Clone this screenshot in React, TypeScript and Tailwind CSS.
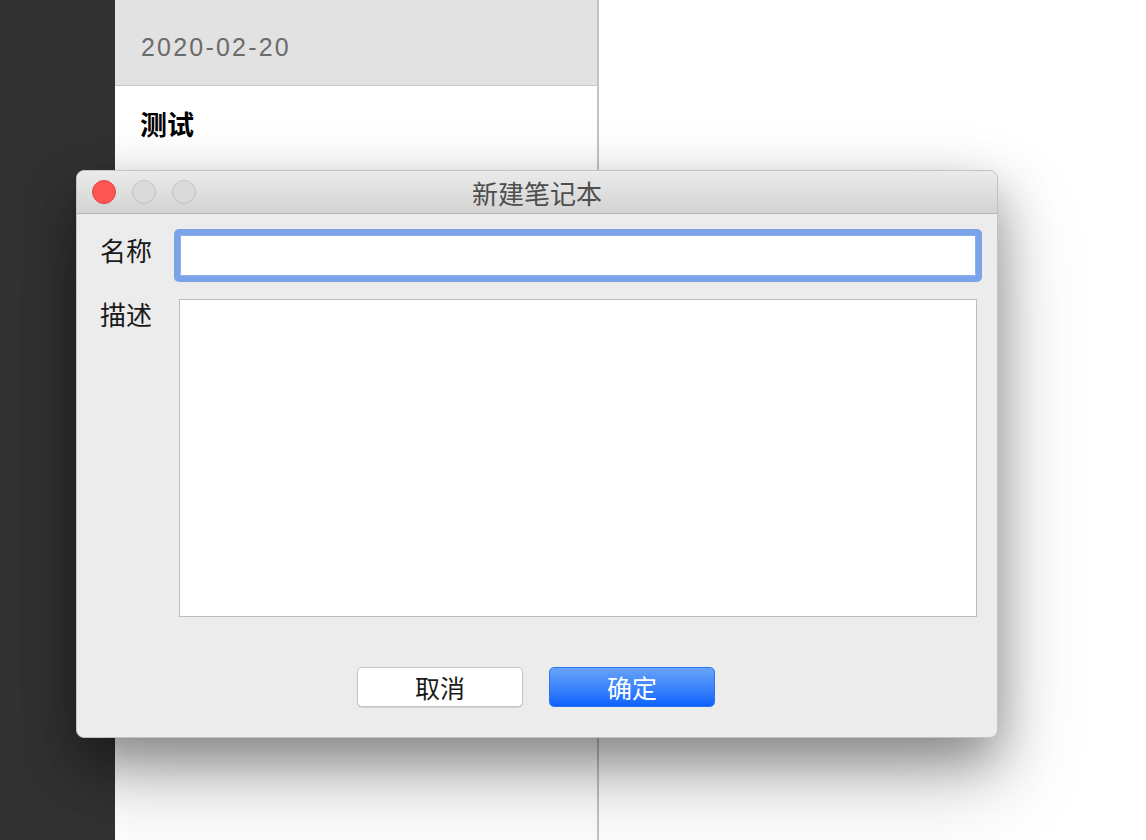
import React from "react";

const font = { fontFamily: '"Noto Sans CJK SC", "Noto Sans", sans-serif' };

export default function App() {
  return (
    <div
      className="relative flex h-[840px] w-[1146px] overflow-hidden bg-white"
      style={font}
    >
      {/* left dark sidebar */}
      <div className="h-full w-[115px] shrink-0 bg-[#323232]" />

      {/* middle note list */}
      <div className="flex h-full w-[484px] shrink-0 flex-col border-r-2 border-[#c4c4c4] bg-white">
        <div className="flex h-[86px] items-center border-b border-[#c9c9c9] bg-[#e2e2e2] pl-[26px] pt-[10px]">
          <span className="font-['Liberation_Sans',sans-serif] text-[25px] leading-none tracking-[2.2px] text-[#6b6b6b]">
            2020-02-20
          </span>
        </div>
        <div className="flex h-[80px] items-start pl-[25px] pt-[24px]">
          <span className="text-[27px] font-bold leading-none text-black">测试</span>
        </div>
      </div>

      {/* right area */}
      <div className="h-full flex-1 bg-white" />

      {/* modal dialog */}
      <div className="absolute left-[76px] top-[170px] flex h-[568px] w-[922px] flex-col overflow-hidden rounded-[8px] border border-[#c2c2c2] bg-[#ececec] shadow-[0_22px_50px_rgba(0,0,0,0.35),0_40px_90px_rgba(0,0,0,0.22)]">
        {/* title bar */}
        <div className="relative flex h-[43px] shrink-0 items-center border-b border-[#b9b9b9] bg-gradient-to-b from-[#ebebeb] to-[#d3d3d3]">
          <div className="flex items-center gap-[16px] pl-[15px]">
            <div className="h-[24px] w-[24px] rounded-full border border-[#e0443e] bg-[#fd5652]" />
            <div className="h-[24px] w-[24px] rounded-full border border-[#c3c3c3] bg-[#dadada]" />
            <div className="h-[24px] w-[24px] rounded-full border border-[#c3c3c3] bg-[#dadada]" />
          </div>
          <div className="absolute inset-0 flex items-center justify-center pt-[1px] text-[26px] leading-none text-[#4e4e4e]">
            新建笔记本
          </div>
        </div>

        {/* body */}
        <div className="flex flex-1 flex-col pl-[23px] pr-[15px] pt-[15px]">
          <div className="flex items-center">
            <div className="w-[74px] pb-[12px] text-[26px] leading-none text-[#1a1a1a]">名称</div>
            <div className="h-[53px] flex-1 rounded-[5px] bg-[#7ba3ea] p-[6px]">
              <div className="h-full w-full border border-[#8eb1ec] bg-white" />
            </div>
          </div>
          <div className="mt-[17px] flex items-start">
            <div className="w-[74px] pt-[2px] text-[26px] leading-none text-[#1a1a1a]">描述</div>
            <div className="mx-[5px] h-[318px] flex-1 border border-[#bdbdbd] bg-white" />
          </div>
          <div className="mt-[50px] flex justify-center gap-[26px] pr-[10px]">
            <button className="flex h-[40px] w-[166px] items-center justify-center rounded-[5px] border border-[#c6c6c6] bg-white text-[25px] leading-none text-[#1a1a1a] shadow-[0_1px_1px_rgba(0,0,0,0.12)]">
              取消
            </button>
            <button className="flex h-[40px] w-[166px] items-center justify-center rounded-[5px] border border-[#2c74f5] bg-gradient-to-b from-[#66a2f8] to-[#0b62fe] text-[25px] leading-none text-white">
              确定
            </button>
          </div>
        </div>
      </div>
    </div>
  );
}
